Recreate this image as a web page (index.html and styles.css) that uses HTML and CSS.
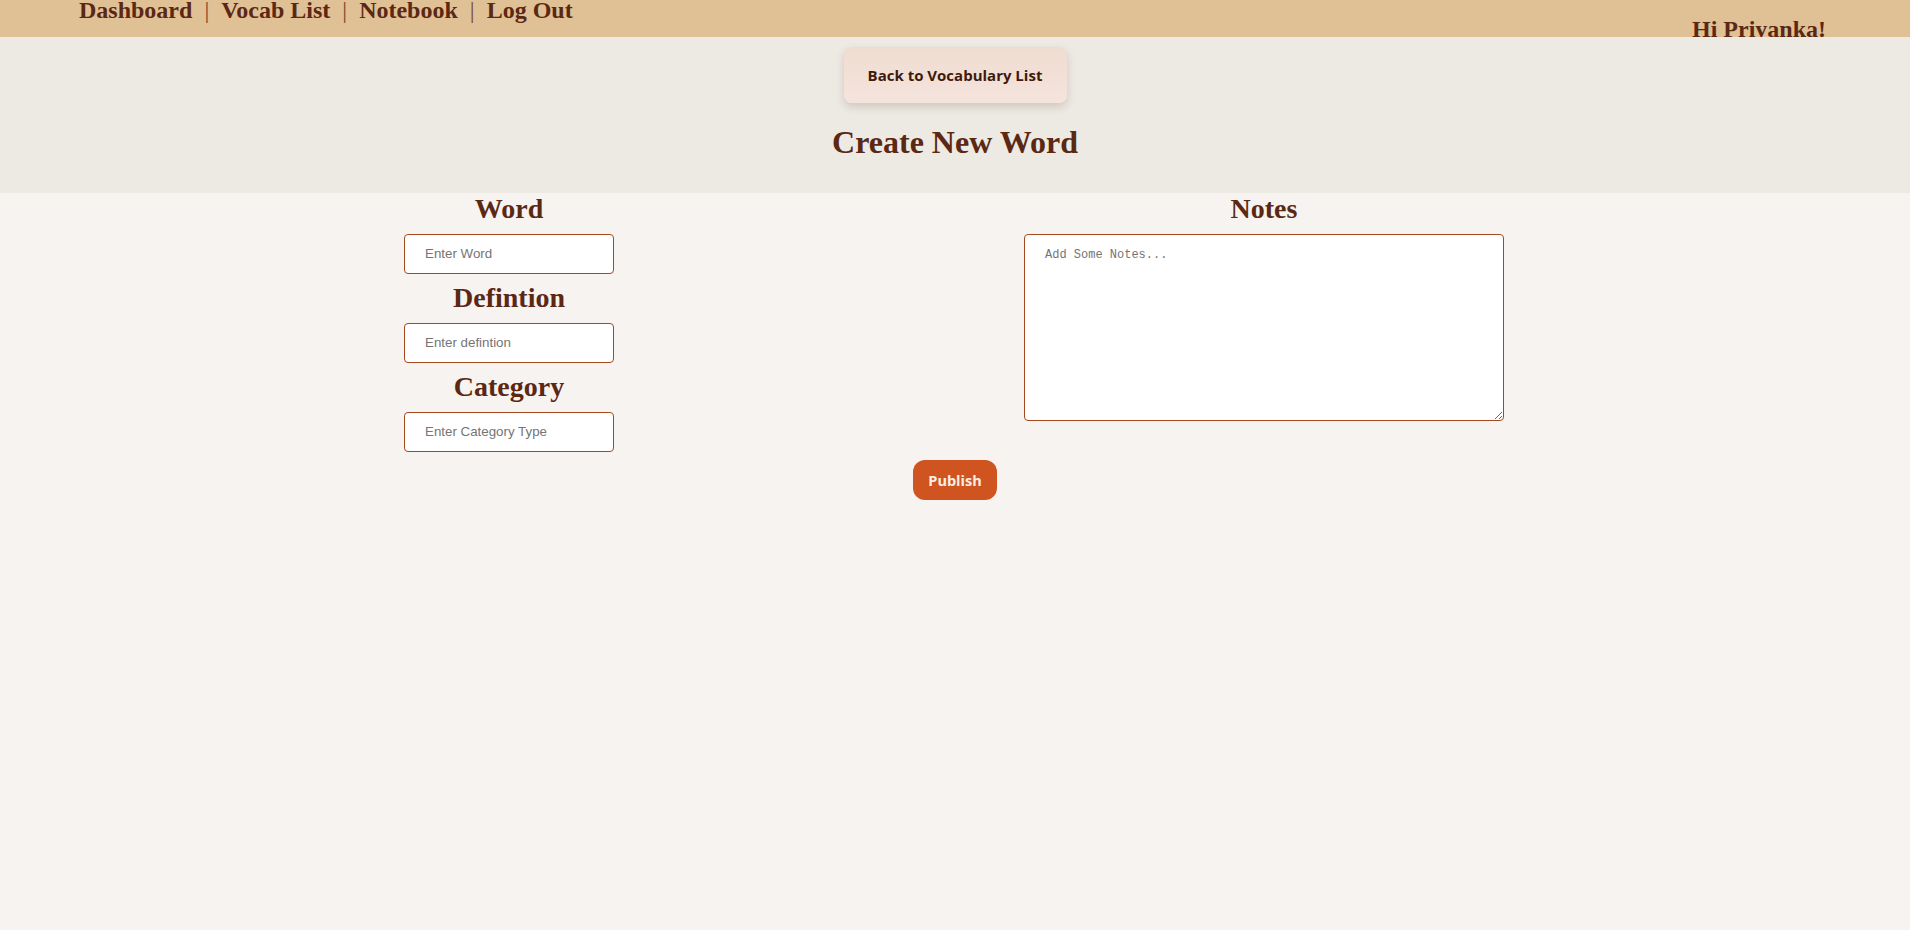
FILE: index.html
```html
<!DOCTYPE html>
<html lang="en">
<head>
<meta charset="utf-8">
<title>Create New Word</title>
<link rel="stylesheet" href="styles.css">
</head>
<body>
<header class="topbar">
  <nav class="nav">
    <a class="nav-link" href="#">Dashboard</a>
    <span class="sep">|</span>
    <a class="nav-link" href="#">Vocab List</a>
    <span class="sep">|</span>
    <a class="nav-link" href="#">Notebook</a>
    <span class="sep">|</span>
    <a class="nav-link" href="#">Log Out</a>
  </nav>
  <div class="greeting">Hi Priyanka!</div>
</header>

<section class="hero">
  <button class="back-btn" type="button">Back to Vocabulary List</button>
  <h1 class="title">Create New Word</h1>
</section>

<main class="main">
  <form class="form">
    <div class="form-row">
      <div class="col-left">
        <h2 class="label">Word</h2>
        <input class="field" type="text" placeholder="Enter Word">
        <h2 class="label">Defintion</h2>
        <input class="field" type="text" placeholder="Enter defintion">
        <h2 class="label">Category</h2>
        <input class="field" type="text" placeholder="Enter Category Type">
      </div>
      <div class="col-right">
        <h2 class="label">Notes</h2>
        <textarea class="notes" placeholder="Add Some Notes..."></textarea>
      </div>
    </div>
    <div class="actions">
      <button class="publish" type="button">Publish</button>
    </div>
  </form>
</main>
</body>
</html>
```

FILE: styles.css
```css
html, body {
  margin: 0;
  padding: 0;
}

body {
  background: #f7f3f0;
  font-family: "Liberation Serif", "Times New Roman", serif;
  color: #5b2814;
  min-height: 930px;
}

.topbar {
  height: 37px;
  overflow: hidden;
  background: #e0c095;
  display: flex;
  justify-content: space-between;
  align-items: flex-start;
  padding: 0 84px 0 79px;
}

.nav {
  display: flex;
  align-items: baseline;
  gap: 12px;
  margin-top: -3px;
  font-size: 24px;
  line-height: 27.6px;
}

.nav-link {
  color: #5b2814;
  font-weight: bold;
  text-decoration: none;
}

.sep {
  color: #7a4a2c;
  font-weight: normal;
}

.greeting {
  padding-top: 16px;
  font-size: 24px;
  line-height: 27.6px;
  font-weight: bold;
  color: #5b2814;
}

.hero {
  background: #ede9e3;
  display: flex;
  flex-direction: column;
  align-items: center;
  padding: 10px 0 11px;
}

.back-btn {
  width: 223px;
  height: 56px;
  border: none;
  border-radius: 8px;
  background: linear-gradient(180deg, #efdcd1 0%, #f5e4dd 100%);
  box-shadow: 0 4px 8px rgba(90, 50, 30, 0.18);
  font-family: "Open Sans", "Noto Sans", sans-serif;
  font-weight: 700;
  font-size: 15px;
  color: #3f1a0b;
  cursor: pointer;
}

.title {
  margin: 21px 0;
  font-size: 32px;
  line-height: 37px;
  font-weight: bold;
  color: #5b2814;
}

.form-row {
  display: flex;
  justify-content: center;
  align-items: flex-start;
  gap: 410px;
  padding-right: 2px;
}

.col-left,
.col-right {
  display: flex;
  flex-direction: column;
  align-items: center;
}

.col-left {
  width: 210px;
}

.col-right {
  width: 480px;
}

.label {
  margin: 0 0 8.5px;
  font-size: 28px;
  line-height: 32px;
  font-weight: bold;
  color: #5b2814;
}

.field {
  box-sizing: border-box;
  width: 210px;
  height: 40px;
  margin: 0 0 8.5px;
  padding: 0 20px;
  border: 1px solid #a4481f;
  border-radius: 4px;
  background: #ffffff;
  font-family: "Liberation Sans", Arial, sans-serif;
  font-size: 13.33px;
  color: #333;
  outline: none;
}

.field::placeholder {
  color: #757575;
}

.notes {
  box-sizing: border-box;
  width: 480px;
  height: 187px;
  padding: 13px 20px;
  border: 1px solid #a4481f;
  border-radius: 4px;
  background: #ffffff;
  font-family: "Liberation Mono", "DejaVu Sans Mono", monospace;
  font-size: 12px;
  color: #333;
  outline: none;
}

.notes::placeholder {
  color: #757575;
}

.actions {
  display: flex;
  justify-content: center;
}

.publish {
  width: 84px;
  height: 40px;
  border: none;
  border-radius: 12px;
  background: #cf541f;
  color: #fbeee2;
  font-family: "Open Sans", "Noto Sans", sans-serif;
  font-weight: 700;
  font-size: 14.5px;
  cursor: pointer;
}
```
